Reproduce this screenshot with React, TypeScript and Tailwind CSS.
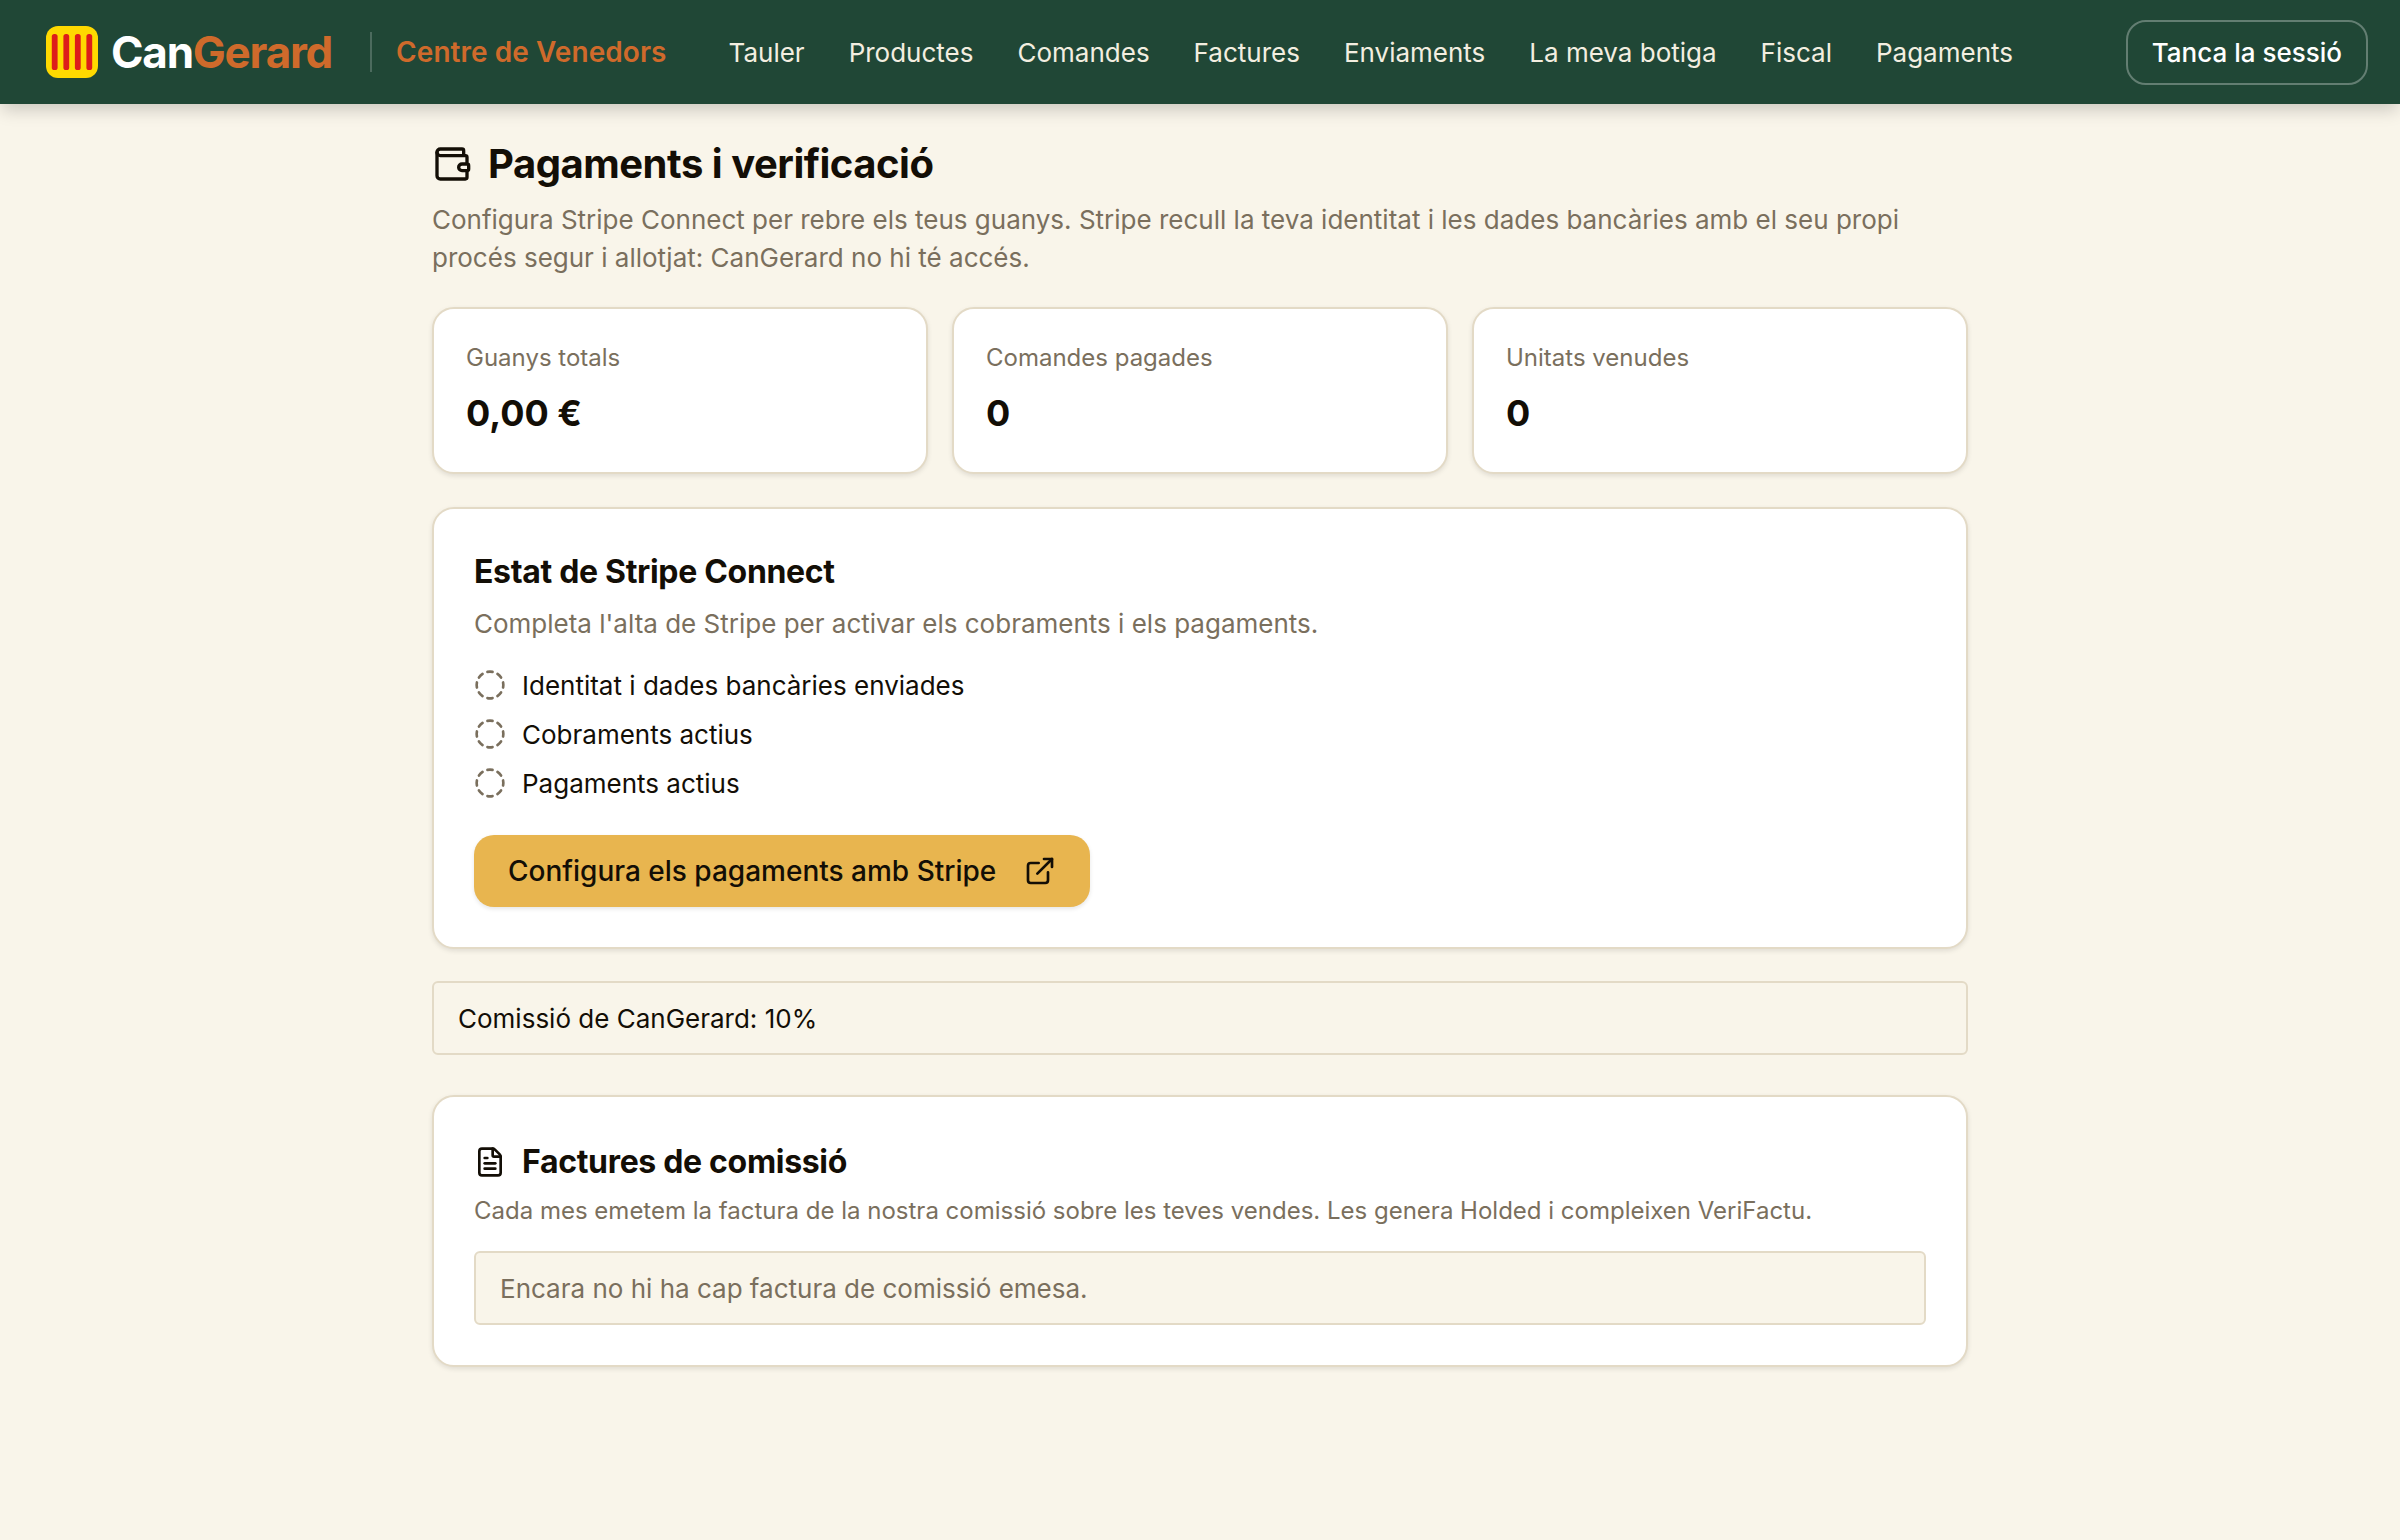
import { CircleDashed, ExternalLink, FileText, Wallet } from 'lucide-react'

const navItems = ['Tauler', 'Productes', 'Comandes', 'Factures', 'Enviaments', 'La meva botiga', 'Fiscal', 'Pagaments']

const stats = [
  { label: 'Guanys totals', value: '0,00 €' },
  { label: 'Comandes pagades', value: '0' },
  { label: 'Unitats venudes', value: '0' },
]

const checks = ['Identitat i dades bancàries enviades', 'Cobraments actius', 'Pagaments actius']

function Logo() {
  return (
    <svg viewBox="0 0 52 52" className="h-[52px] w-[52px] shrink-0">
      <rect width="52" height="52" rx="12" fill="#ffd900" />
      <rect x="5.8" y="8" width="5.8" height="36" rx="2.6" fill="#dd1c1a" />
      <rect x="17.4" y="8" width="5.8" height="36" rx="2.6" fill="#dd1c1a" />
      <rect x="28.9" y="8" width="5.8" height="36" rx="2.6" fill="#dd1c1a" />
      <rect x="40.4" y="8" width="5.8" height="36" rx="2.6" fill="#dd1c1a" />
    </svg>
  )
}

export default function App() {
  return (
    <div className="min-h-[1540px] bg-[#f9f5ea] font-['Inter',sans-serif] text-[#130e06]">
      {/* Top bar */}
      <header className="relative flex h-[104px] items-center bg-[#204736] pl-[46px] pr-[32px] shadow-[0_8px_16px_-2px_rgba(0,0,0,0.18)]">
        <Logo />
        <span className="ml-[13px] text-[44px] font-bold tracking-[-0.028em]">
          <span className="text-white">Can</span>
          <span className="text-[#cf6a2b]">Gerard</span>
        </span>
        <span className="ml-[38px] h-[40px] w-[2px] bg-white/20" />
        <span className="ml-[24px] text-[28px] font-semibold tracking-[0.002em] text-[#cf6a2b]">Centre de Venedors</span>
        <nav className="ml-[62px] flex items-center gap-[44px] text-[26px] text-[#f3eee0]">
          {navItems.map((item) => (
            <a key={item}>{item}</a>
          ))}
        </nav>
        <button className="ml-auto flex h-[65px] items-center rounded-[20px] border-2 border-white/30 px-[24px] text-[26px] font-medium text-white">
          Tanca la sessió
        </button>
      </header>

      <main className="mx-auto w-[1536px] pt-[35px]">
        <div className="flex items-center gap-[16px]">
          <Wallet className="h-[40px] w-[40px]" strokeWidth={2} />
          <h1 className="text-[40px] font-bold leading-[50px] tracking-[-0.012em]">Pagaments i verificació</h1>
        </div>
        <p className="mt-[12px] text-[26px] leading-[38px] text-[#7a6f5d]">
          Configura Stripe Connect per rebre els teus guanys. Stripe recull la teva identitat i les dades bancàries amb el seu propi procés segur i allotjat: CanGerard no hi té accés.
        </p>

        {/* Stats */}
        <div className="mt-[30px] grid grid-cols-3 gap-[24px]">
          {stats.map((stat) => (
            <div key={stat.label} className="h-[167px] rounded-[22px] border-2 border-[#e3dac6] bg-white px-[32px] pt-[32px] shadow-[0_2px_5px_rgba(0,0,0,0.1)]">
              <div className="text-[24px] leading-[34px] text-[#7a6f5d]">{stat.label}</div>
              <div className="mt-[13px] text-[36px] font-bold leading-[50px]">{stat.value}</div>
            </div>
          ))}
        </div>

        {/* Stripe status */}
        <section className="mt-[33px] h-[442px] rounded-[22px] border-2 border-[#e3dac6] bg-white px-[40px] pt-[41px] shadow-[0_2px_5px_rgba(0,0,0,0.1)]">
          <h2 className="text-[32px] font-bold leading-[44px] tracking-[-0.01em]">Estat de Stripe Connect</h2>
          <p className="mt-[10px] text-[26px] leading-[40px] text-[#7a6f5d]">
            Completa l'alta de Stripe per activar els cobraments i els pagaments.
          </p>
          <ul className="mt-[21px] flex flex-col gap-[9px]">
            {checks.map((check) => (
              <li key={check} className="flex h-[40px] items-center gap-[16px] text-[26px]">
                <CircleDashed className="h-[32px] w-[32px] text-[#7a6f5d]" strokeWidth={2} />
                {check}
              </li>
            ))}
          </ul>
          <button className="mt-[32px] flex h-[72px] w-[616px] items-center justify-between rounded-[20px] bg-[#e8b54f] px-[34px] text-[28px] font-medium shadow-[0_2px_4px_rgba(0,0,0,0.1)]">
            Configura els pagaments amb Stripe
            <ExternalLink className="h-[32px] w-[32px]" strokeWidth={2} />
          </button>
        </section>

        <div className="mt-[32px] flex h-[74px] items-center rounded-[6px] border-2 border-[#e3dac6] px-[24px] text-[26px]">
          Comissió de CanGerard: 10%
        </div>

        {/* Commission invoices */}
        <section className="mt-[40px] h-[272px] rounded-[22px] border-2 border-[#e3dac6] bg-white px-[40px] pt-[43px] shadow-[0_2px_5px_rgba(0,0,0,0.1)]">
          <div className="flex items-center gap-[16px]">
            <FileText className="h-[32px] w-[32px]" strokeWidth={2} />
            <h2 className="text-[32px] font-bold leading-[44px] tracking-[-0.01em]">Factures de comissió</h2>
          </div>
          <p className="mt-[7px] text-[24px] leading-[40px] text-[#7a6f5d]">
            Cada mes emetem la factura de la nostra comissió sobre les teves vendes. Les genera Holded i compleixen VeriFactu.
          </p>
          <div className="mt-[20px] flex h-[74px] items-center rounded-[6px] border-2 border-[#e3dac6] bg-[#f9f5ea] px-[24px] text-[26px] text-[#7a6f5d]">
            Encara no hi ha cap factura de comissió emesa.
          </div>
        </section>
      </main>
    </div>
  )
}
